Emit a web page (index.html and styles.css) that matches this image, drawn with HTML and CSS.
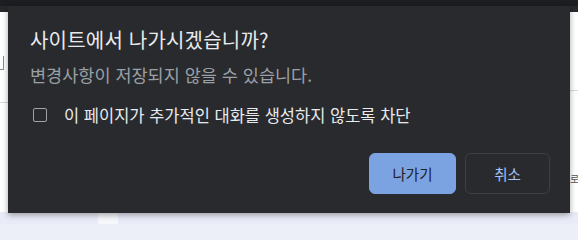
FILE: index.html
```html
<!DOCTYPE html>
<html lang="ko">
<head>
<meta charset="utf-8">
<title>사이트에서 나가시겠습니까?</title>
<link rel="stylesheet" href="styles.css">
</head>
<body>
<div class="topbar"></div>
<div class="page">
  <div class="content">
    <div class="left-edge">
      <div class="edge-mark"></div>
      <div class="edge-line"></div>
    </div>
    <div class="right-edge">
      <div class="edge-line r"></div>
      <div class="edge-text">로 간</div>
    </div>
  </div>
  <div class="footer">
    <div class="footer-shape"></div>
  </div>
</div>
<div class="dialog" role="dialog">
  <h1 class="title">사이트에서 나가시겠습니까?</h1>
  <p class="message">변경사항이 저장되지 않을 수 있습니다.</p>
  <label class="check-row">
    <span class="checkbox"></span>
    <span class="check-label">이 페이지가 추가적인 대화를 생성하지 않도록 차단</span>
  </label>
  <div class="actions">
    <button class="btn primary">나가기</button>
    <button class="btn secondary">취소</button>
  </div>
</div>
</body>
</html>
```
FILE: styles.css
```css
* { box-sizing: border-box; }
html { background: #eceef8; }
html, body { margin: 0; padding: 0; }
body {
  width: 578px;
  height: 224px;
  overflow: hidden;
  position: relative;
  background: #eceef8;
  font-family: "Noto Sans CJK KR", "Noto Sans", sans-serif;
}
.topbar {
  height: 12px;
  background: #28292c;
  border-top: 6px solid #1d1e21;
}
.page {
  height: 212px;
  display: flex;
  flex-direction: column;
}
.content {
  flex: 1;
  display: flex;
  justify-content: space-between;
}
.left-edge, .right-edge {
  width: 9px;
  background: #ffffff;
  position: relative;
}
.edge-mark {
  margin-top: 44px;
  width: 4px;
  height: 14px;
  border-right: 1px solid #8a8a8a;
  border-bottom: 1px solid #8a8a8a;
}
.edge-line {
  margin-top: 32px;
  height: 1px;
  background: #d8d8dc;
}
.edge-line.r { margin-top: 78px; }
.edge-text {
  margin-top: 80px;
  margin-left: 1px;
  font-size: 10px;
  color: #555;
  white-space: nowrap;
}
.footer {
  height: 12px;
  background: #e9ecf8;
  position: relative;
}
.footer-shape {
  margin-left: 98px;
  width: 20px;
  height: 12px;
  background: #f7f8fc;
}
.dialog {
  position: absolute;
  left: 8px;
  top: 6px;
  width: 562px;
  height: 207px;
  background: #292a2d;
  box-shadow: 0 2px 6px rgba(0,0,0,0.35);
  padding: 22px 20px 19px 22px;
  display: flex;
  flex-direction: column;
}
.title {
  margin: 0;
  font-size: 20px;
  line-height: 24px;
  font-weight: 400;
  letter-spacing: 0.2px;
  color: #e8eaed;
}
.message {
  margin: 13px 0 0;
  font-size: 17.5px;
  line-height: 20px;
  color: #9aa0a6;
}
.check-row {
  margin-top: 20px;
  height: 20px;
  display: flex;
  align-items: center;
  padding-left: 3px;
}
.checkbox {
  width: 14px;
  height: 14px;
  border: 1.5px solid #a0a4a8;
  border-radius: 2px;
  flex: none;
}
.check-label {
  margin-left: 17px;
  font-size: 16.5px;
  line-height: 20px;
  color: #e8eaed;
}
.actions {
  margin-top: 28px;
  display: flex;
  justify-content: flex-end;
  gap: 9px;
}
.btn {
  font-family: "Noto Sans CJK KR", "Noto Sans", sans-serif;
  font-size: 14.5px;
  height: 41px;
  border-radius: 6px;
  padding: 0;
}
.primary {
  width: 87px;
  background: #7ba3e2;
  border: 1px solid #7ba3e2;
  color: #202124;
}
.secondary {
  width: 85px;
  background: #292a2d;
  border: 1px solid #3c4043;
  color: #a3c4f7;
}
```
